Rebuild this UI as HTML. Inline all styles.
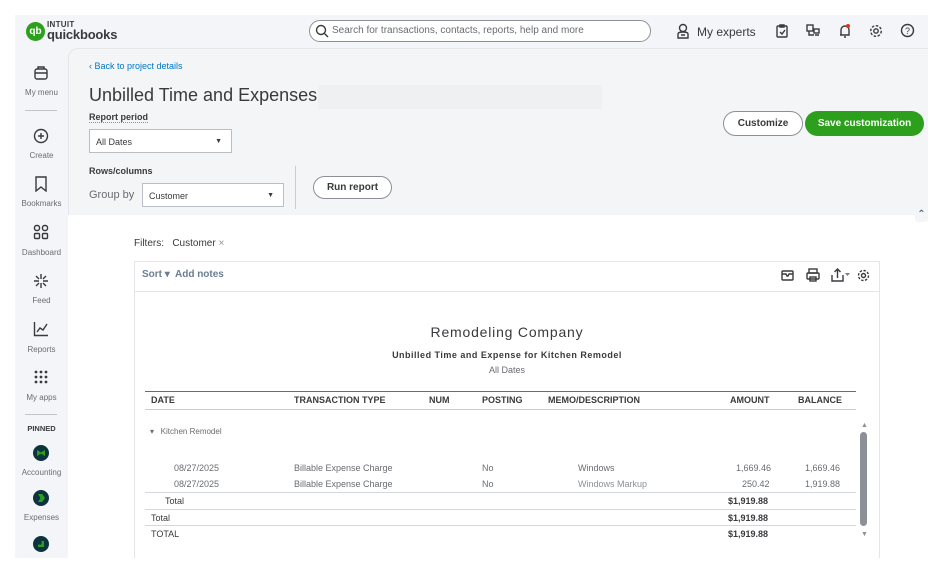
<!DOCTYPE html>
<html><head><meta charset="utf-8"><style>
*{margin:0;padding:0;box-sizing:border-box}
body{width:943px;height:573px;background:#fff;font-family:"Liberation Sans",sans-serif;color:#393a3d;position:relative;overflow:hidden}
.a{position:absolute}
.ic{stroke:#393a3d;fill:none;stroke-width:1.4}
.sl{font-size:8px;color:#6b6c72;text-align:center;width:53px;left:15px}
</style></head><body>
<div class="a" style="left:15px;top:15px;width:913px;height:543px;background:#f4f5f8"></div>
<div class="a" style="left:68px;top:48px;width:860px;height:167px;background:#f3f5f7;border-top:1px solid #e4e6e9;border-left:1px solid #e4e6e9;border-top-left-radius:10px"></div>
<div class="a" style="left:68px;top:215px;width:860px;height:343px;background:#fff"></div>
<div class="a" style="left:26px;top:22px;width:19px;height:19px;border-radius:50%;background:#2ca01c;color:#fff;font-size:10px;font-weight:bold;text-align:center;line-height:19px">qb</div>
<div class="a" style="left:47px;top:20px;font-size:8px;font-weight:bold;letter-spacing:.3px">INTUIT</div>
<div class="a" style="left:47px;top:27px;font-size:13px;font-weight:bold;letter-spacing:-.2px">quickbooks</div>
<div class="a" style="left:309px;top:20px;width:342px;height:22px;border:1px solid #8d9096;border-radius:11px;background:#fff"></div>
<svg class="a" style="left:315px;top:24px" width="14" height="14"><circle cx="6" cy="6" r="4.5" class="ic"/><path d="M9.5 9.5L13 13" class="ic"/></svg>
<div class="a" style="left:332px;top:25px;font-size:10px;color:#6b6c72">Search for transactions, contacts, reports, help and more</div>
<svg class="a" style="left:676px;top:23px" width="14" height="16"><circle cx="7" cy="5" r="3.5" class="ic"/><path d="M2 15V11q0-2 5-2t5 2v4zM5 12h4" class="ic"/></svg>
<div class="a" style="left:697px;top:25px;font-size:12px;color:#393a3d">My experts</div>
<svg class="a" style="left:776px;top:24px" width="12" height="14"><rect x="1" y="2" width="10" height="11" rx="1" class="ic"/><path d="M4 1h4v2H4zM4 8l2 2 3-4" class="ic"/></svg>
<svg class="a" style="left:806px;top:24px" width="14" height="14"><rect x="1" y="1" width="6" height="6" class="ic"/><rect x="8" y="5" width="5" height="4" class="ic"/><path d="M3 7v4h5M9 11h4" class="ic"/></svg>
<svg class="a" style="left:838px;top:23px" width="14" height="15"><path d="M3 12V7a4 4 0 018 0v5H2M6 14h2" class="ic"/><circle cx="10" cy="3" r="2" fill="#e0301e"/></svg>
<svg class="a" style="left:869px;top:24px" width="14" height="14"><circle cx="7" cy="7" r="2.2" class="ic"/><circle cx="7" cy="7" r="5.3" class="ic" stroke-dasharray="2.5 1.6"/></svg>
<svg class="a" style="left:900px;top:23px" width="15" height="15"><circle cx="7.5" cy="7.5" r="6" class="ic"/><text x="7.5" y="11" font-size="9" text-anchor="middle" fill="#393a3d" font-family="Liberation Sans">?</text></svg>
<svg class="a" style="left:33px;top:65px" width="16" height="16"><rect x="2" y="4" width="12" height="10" rx="2" class="ic"/><path d="M5 4V2h6v2M2 8h12" class="ic"/></svg>
<div class="a sl" style="top:88px">My menu</div>
<div class="a" style="left:25px;top:110px;width:32px;height:1px;background:#c1c4c8"></div>
<svg class="a" style="left:33px;top:128px" width="16" height="16"><circle cx="8" cy="8" r="6.5" class="ic"/><path d="M8 5v6M5 8h6" class="ic"/></svg>
<div class="a sl" style="top:151px">Create</div>
<svg class="a" style="left:34px;top:176px" width="14" height="16"><path d="M2 1h10v14l-5-4-5 4z" class="ic"/></svg>
<div class="a sl" style="top:199px">Bookmarks</div>
<svg class="a" style="left:33px;top:224px" width="16" height="16"><rect x="1.5" y="1.5" width="5" height="5" rx="2" class="ic"/><rect x="9.5" y="1.5" width="5" height="5" rx="2" class="ic"/><rect x="1.5" y="9.5" width="5" height="5" rx="1" class="ic"/><rect x="9.5" y="9.5" width="5" height="5" rx="1" class="ic"/></svg>
<div class="a sl" style="top:248px">Dashboard</div>
<svg class="a" style="left:33px;top:273px" width="16" height="16"><path d="M8 1v5M8 10v5M1 8h5M10 8h5M3 3l3 3M13 3l-3 3M3 13l3-3M13 13l-3-3" class="ic"/></svg>
<div class="a sl" style="top:296px">Feed</div>
<svg class="a" style="left:33px;top:321px" width="16" height="16"><path d="M1.5 1v13.5H15M4 11l3-4 3 2 4-6" class="ic"/></svg>
<div class="a sl" style="top:345px">Reports</div>
<svg class="a" style="left:34px;top:370px" width="14" height="14"><g fill="#393a3d"><circle cx="2" cy="2" r="1.4"/><circle cx="7" cy="2" r="1.4"/><circle cx="12" cy="2" r="1.4"/><circle cx="2" cy="7" r="1.4"/><circle cx="7" cy="7" r="1.4"/><circle cx="12" cy="7" r="1.4"/><circle cx="2" cy="12" r="1.4"/><circle cx="7" cy="12" r="1.4"/><circle cx="12" cy="12" r="1.4"/></g></svg>
<div class="a sl" style="top:393px">My apps</div>
<div class="a" style="left:25px;top:414px;width:32px;height:1px;background:#c1c4c8"></div>
<div class="a sl" style="top:424px;font-weight:bold;color:#393a3d;font-size:7.5px">PINNED</div>
<div class="a" style="left:33px;top:445px;width:16px;height:16px;border-radius:50%;background:#0d333f"><div style="margin:5px 4px;width:8px;height:6px;background:#2ca01c;clip-path:polygon(0 0,50% 40%,100% 0,100% 100%,50% 60%,0 100%)"></div></div>
<div class="a sl" style="top:468px">Accounting</div>
<div class="a" style="left:33px;top:490px;width:16px;height:16px;border-radius:50%;background:#0d333f"><div style="margin:4px 5px;width:7px;height:8px;background:#2ca01c;clip-path:polygon(0 0,60% 0,100% 50%,60% 100%,0 100%,35% 50%)"></div></div>
<div class="a sl" style="top:513px">Expenses</div>
<div class="a" style="left:33px;top:536px;width:16px;height:16px;border-radius:50%;background:#0d333f"><div style="margin:5px;width:6px;height:6px;background:#2ca01c;clip-path:polygon(60% 0,100% 0,100% 100%,0 100%,0 60%,60% 60%)"></div></div>
<div class="a" style="left:89px;top:61px;font-size:9px;color:#0077c5">&#8249; Back to project details</div>
<div class="a" style="left:318px;top:85px;width:284px;height:24px;background:#eef0f2"></div>
<div class="a" style="left:89px;top:85px;font-size:18px;color:#393a3d">Unbilled Time and Expenses</div>
<div class="a" style="left:89px;top:112px;font-size:9px;font-weight:bold;border-bottom:1px dotted #8d9096">Report period</div>
<div class="a" style="left:89px;top:129px;width:143px;height:24px;background:#fff;border:1px solid #babec5;font-size:9px;padding:7px 6px">All Dates<span style="position:absolute;right:9px;top:8px;font-size:7px">&#9660;</span></div>
<div class="a" style="left:89px;top:166px;font-size:9px;font-weight:bold">Rows/columns</div>
<div class="a" style="left:89px;top:189px;font-size:11px;color:#6b6c72">Group by</div>
<div class="a" style="left:142px;top:183px;width:142px;height:24px;background:#fff;border:1px solid #babec5;font-size:9px;padding:7px 6px">Customer<span style="position:absolute;right:9px;top:8px;font-size:7px">&#9660;</span></div>
<div class="a" style="left:295px;top:166px;width:1px;height:43px;background:#c9ccd1"></div>
<div class="a" style="left:313px;top:176px;width:79px;height:23px;border:1px solid #8d9096;border-radius:12px;background:#fff;font-size:10px;font-weight:bold;text-align:center;line-height:21px">Run report</div>
<div class="a" style="left:723px;top:111px;width:80px;height:25px;border:1px solid #8d9096;border-radius:13px;background:#fff;font-size:10px;font-weight:bold;text-align:center;line-height:23px">Customize</div>
<div class="a" style="left:805px;top:111px;width:119px;height:25px;border-radius:13px;background:#2ca01c;color:#fff;font-size:10px;font-weight:bold;text-align:center;line-height:25px">Save customization</div>
<div class="a" style="left:915px;top:206px;width:13px;height:16px;background:#f3f5f7;border-radius:3px;color:#33527a;font-size:10px;text-align:center;line-height:18px">&#8963;</div>
<div class="a" style="left:134px;top:238px;font-size:10px;color:#393a3d">Filters:&nbsp;&nbsp; Customer <span style="color:#8d9096">&#215;</span></div>
<div class="a" style="left:134px;top:261px;width:746px;height:297px;border:1px solid #e3e5e8;border-bottom:none;background:#fff"></div>
<div class="a" style="left:134px;top:291px;width:746px;height:1px;background:#e3e5e8"></div>
<div class="a" style="left:142px;top:269px;font-size:10px;font-weight:bold;color:#6b7d93">Sort &#9662;&nbsp; Add notes</div>
<svg class="a" style="left:781px;top:270px" width="13" height="11"><rect x="1" y="1" width="11" height="9" rx="1" class="ic"/><path d="M1 4h4l1 2h1l1-2h4" class="ic"/></svg>
<svg class="a" style="left:806px;top:268px" width="14" height="14"><rect x="3" y="1" width="8" height="4" class="ic"/><rect x="1" y="5" width="12" height="6" rx="1" class="ic"/><rect x="4" y="9" width="6" height="4" class="ic"/></svg>
<svg class="a" style="left:831px;top:268px" width="20" height="14"><path d="M1 7v6h11V7M6.5 10V1M3.5 4l3-3 3 3" class="ic"/><path d="M14 5h5l-2.5 3z" fill="#6b7d93"/></svg>
<svg class="a" style="left:857px;top:269px" width="13" height="13"><circle cx="6.5" cy="6.5" r="2" class="ic"/><circle cx="6.5" cy="6.5" r="5" class="ic" stroke-dasharray="2.4 1.5"/></svg>
<div class="a" style="left:134px;top:324px;width:746px;text-align:center;font-size:14px;letter-spacing:.8px;color:#393a3d">Remodeling Company</div>
<div class="a" style="left:134px;top:350px;width:746px;text-align:center;font-size:9px;font-weight:bold;letter-spacing:.5px">Unbilled Time and Expense for Kitchen Remodel</div>
<div class="a" style="left:134px;top:365px;width:746px;text-align:center;font-size:9px;color:#6b6c72">All Dates</div>
<div class="a" style="left:145px;top:391px;width:711px;height:1px;background:#6b6c72"></div>
<div class="a" style="left:145px;top:409px;width:711px;height:1px;background:#c9ccd1"></div>
<div class="a" style="left:145px;top:395px;font-size:9px;font-weight:bold;width:711px">
<span class="a" style="left:6px">DATE</span><span class="a" style="left:149px">TRANSACTION TYPE</span><span class="a" style="left:284px">NUM</span><span class="a" style="left:337px">POSTING</span><span class="a" style="left:403px">MEMO/DESCRIPTION</span><span class="a" style="left:585px">AMOUNT</span><span class="a" style="left:653px">BALANCE</span></div>
<div class="a" style="left:150px;top:427px;font-size:8px;color:#6b6c72">&#9662;&nbsp;&nbsp; Kitchen Remodel</div>
<div class="a" style="left:145px;top:463px;font-size:9px;color:#6b6c72;width:711px">
<span class="a" style="left:29px">08/27/2025</span><span class="a" style="left:149px">Billable Expense Charge</span><span class="a" style="left:337px">No</span><span class="a" style="left:433px">Windows</span><span class="a" style="left:591px">1,669.46</span><span class="a" style="left:660px">1,669.46</span></div>
<div class="a" style="left:145px;top:479px;font-size:9px;color:#6b6c72;width:711px">
<span class="a" style="left:29px">08/27/2025</span><span class="a" style="left:149px">Billable Expense Charge</span><span class="a" style="left:337px">No</span><span class="a" style="left:433px;color:#8d9096">Windows Markup</span><span class="a" style="left:597px">250.42</span><span class="a" style="left:660px">1,919.88</span></div>
<div class="a" style="left:145px;top:492px;width:711px;height:1px;background:#d4d7dc"></div>
<div class="a" style="left:145px;top:509px;width:711px;height:1px;background:#d4d7dc"></div>
<div class="a" style="left:145px;top:525px;width:711px;height:1px;background:#d4d7dc"></div>
<div class="a" style="left:165px;top:496px;font-size:9px">Total</div><div class="a" style="left:728px;top:496px;font-size:9px;font-weight:bold">$1,919.88</div>
<div class="a" style="left:151px;top:513px;font-size:9px">Total</div><div class="a" style="left:728px;top:513px;font-size:9px;font-weight:bold">$1,919.88</div>
<div class="a" style="left:151px;top:529px;font-size:9px">TOTAL</div><div class="a" style="left:728px;top:529px;font-size:9px;font-weight:bold">$1,919.88</div>
<div class="a" style="left:861px;top:422px;font-size:7px;color:#8d9096">&#9650;</div>
<div class="a" style="left:860px;top:432px;width:7px;height:94px;border-radius:4px;background:#8d9096"></div>
<div class="a" style="left:861px;top:531px;font-size:7px;color:#8d9096">&#9660;</div>
</body></html>
